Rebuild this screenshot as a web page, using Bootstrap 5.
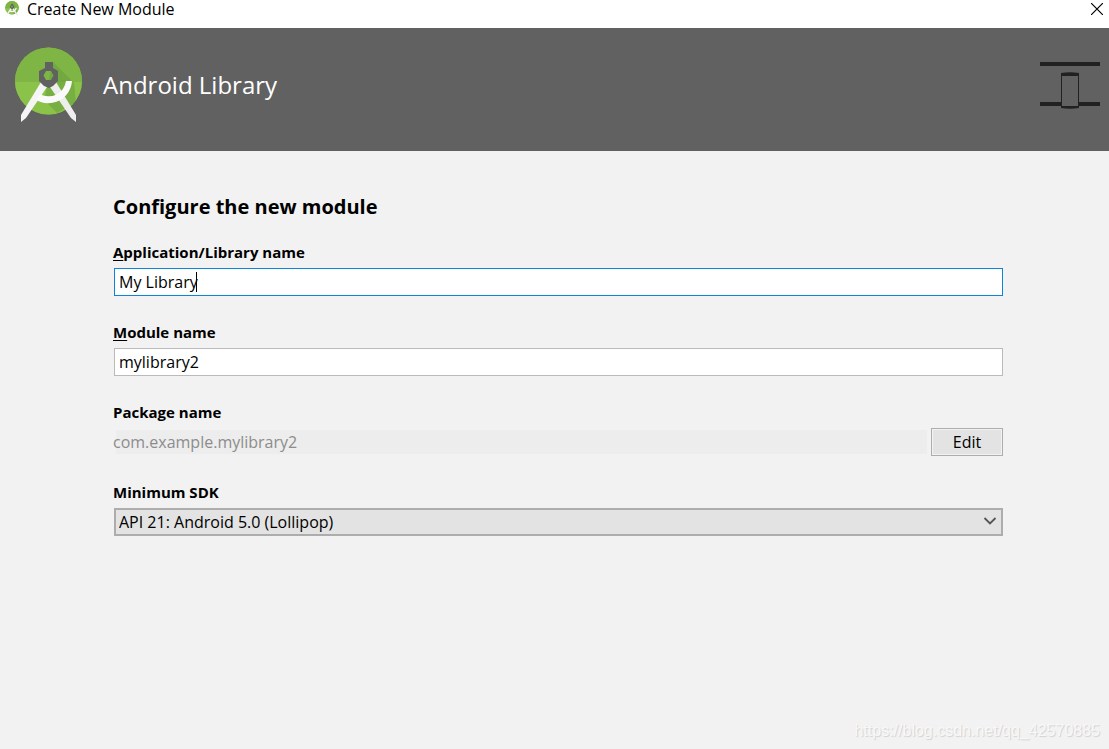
<!DOCTYPE html>
<html lang="en">
<head>
<meta charset="utf-8">
<meta name="viewport" content="width=device-width, initial-scale=1">
<title>Create New Module</title>
<link rel="stylesheet" href="https://cdn.jsdelivr.net/npm/bootstrap@5.3.0/dist/css/bootstrap.min.css">
<script defer src="https://cdn.jsdelivr.net/npm/bootstrap@5.3.0/dist/js/bootstrap.bundle.min.js"></script>
<style>
  body { font-family: "Open Sans", "Noto Sans", sans-serif; font-size: 16px; line-height: 24px; color: #000; background: #f2f2f2; }
  .title-bar { height: 28px; padding: 0 6px 0 5px; background: #fff; }
  .title-bar h1 { font-size: 16px; line-height: 18px; }
  .title-bar button { padding: 3px 0 0; }
  .wizard-head { height: 123px; padding: 0 9px 10px 14px; background: #616161; color: #fff; }
  .wizard-head h2 { font-size: 24px; line-height: 36px; }
  .wizard-body { padding: 38px 106px 0 113px; }
  .wizard-body h3 { font-size: 20px; line-height: 36px; margin-bottom: 15px; }
  .field { margin-bottom: 24px; }
  .form-label { font-size: 15px; margin-bottom: 4px; }
  .form-label u { text-underline-offset: 2px; }
  .field-box { margin-left: 1px; }
  .form-control, .form-select { height: 28px; padding: 0 4px; font-size: 16px; line-height: 24px; color: #000; border: 1px solid #bababa; border-radius: 0; }
  .form-control:focus, .form-control.active { border-color: #0c84d8; box-shadow: none; }
  .form-control.package { height: 24px; padding: 0; border: 0; color: #8c8c8c; background: linear-gradient(to right, #f2f2f2 3px, #ededed 3px); }
  .form-select { border: 2px solid #adadad; padding-left: 3px; background-color: #e3e3e3; background-image: none; }
  .caret { position: absolute; left: 82px; top: 4px; width: 1px; height: 20px; background: #000; }
  .arrow { position: absolute; right: 6px; top: 8px; pointer-events: none; }
  .btn-edit { width: 72px; height: 28px; padding: 0; font-size: 16px; line-height: 24px; color: #000; background: #e3e3e3; border: 1px solid #adadad; border-radius: 0; box-shadow: inset 0 0 0 1px #f2f2f2; }
  .watermark { padding: 0 9px 6px; font-family: "Liberation Sans", sans-serif; font-size: 16px; color: #f8f8f8; text-shadow: 1px 1px 1px #d0d0d0; }
</style>
</head>
<body class="min-vh-100 d-flex flex-column">
<svg width="0" height="0" class="position-absolute" aria-hidden="true">
  <defs>
    <clipPath id="disc"><circle cx="34.500" cy="34" r="33.500"/></clipPath>
    <symbol id="studio" viewBox="0 0 69 76">
      <circle cx="34.500" cy="34" r="33.500" fill="#7cb342"/>
      <g clip-path="url(#disc)">
        <path d="M0 0H69V36H0Z" fill="#7eb544"/>
        <path d="M0 35H69V68H0Z" fill="#8bc34a"/>
        <path d="M39 15L60 36 62 55 43 66 30 53Z" fill="#659c3b" opacity=".5"/>
      </g>
      <path d="M27 35L33 40 12 71 7 75V68Z" fill="#f5f5f5"/>
      <path d="M42 35L36 40 57 71 62 75V68Z" fill="#eee"/>
      <path d="M58 34A24 24 0 0 1 22 53L26 47A17.500 17.500 0 0 0 52 34Z" fill="#fafafa"/>
      <path fill-rule="evenodd" d="M31 15H39V21L44 24V34L39 39 35 41 30 39 25 34V24L31 21ZM32 24L29.500 28.500 32 33H37L39.500 28.500 37 24Z" fill="#616161"/>
    </symbol>
  </defs>
</svg>
<header>
  <div class="title-bar d-flex align-items-start justify-content-between">
    <div class="d-flex gap-2">
      <svg width="14" height="17" aria-hidden="true"><use href="#studio"/></svg>
      <h1 class="fw-normal m-0">Create New Module</h1>
    </div>
    <button type="button" class="border-0 bg-transparent d-flex" aria-label="Close">
      <svg width="12" height="12" viewBox="0 0 12 12" aria-hidden="true"><path d="M0 0L12 12M12 0L0 12" stroke="#000" stroke-width="1.200"/></svg>
    </button>
  </div>
  <div class="wizard-head d-flex align-items-center justify-content-between">
    <div class="d-flex align-items-center">
      <svg width="69" height="76" class="me-3" aria-hidden="true"><use href="#studio"/></svg>
      <h2 class="fw-normal m-0 ps-1">Android Library</h2>
    </div>
    <svg width="60" height="48" viewBox="0 0 60 48" aria-hidden="true">
      <path d="M0 1H60V5H0ZM0 41H60V45H0Z" fill="#212121"/>
      <path d="M21 12Q30 10.500 39 12V47Q30 48.500 21 47Z" fill="#212121"/>
      <path d="M22 15H38V45H22Z" fill="#616161"/>
    </svg>
  </div>
</header>
<main class="wizard-body flex-grow-1">
  <h3 class="fw-bold">Configure the new module</h3>
  <form>
    <div class="field">
      <label class="form-label fw-bold d-block" for="app"><u>A</u>pplication/Library name</label>
      <div class="field-box position-relative">
        <input class="form-control active" id="app" type="text" value="My Library">
        <span class="caret"></span>
      </div>
    </div>
    <div class="field">
      <label class="form-label fw-bold d-block" for="module"><u>M</u>odule name</label>
      <div class="field-box"><input class="form-control" id="module" type="text" value="mylibrary2"></div>
    </div>
    <div class="field">
      <label class="form-label fw-bold d-block" for="package">Package name</label>
      <div class="d-flex align-items-center gap-1">
        <input class="form-control package" id="package" type="text" value="com.example.mylibrary2" disabled>
        <button type="button" class="btn btn-edit flex-shrink-0">Edit</button>
      </div>
    </div>
    <div class="field">
      <label class="form-label fw-bold d-block" for="sdk">Minimum SDK</label>
      <div class="field-box position-relative">
        <select class="form-select" id="sdk"><option>API 21: Android 5.0 (Lollipop)</option></select>
        <svg class="arrow" width="14" height="10" viewBox="0 0 14 10" aria-hidden="true"><path d="M1.500 2L7 7.500 12.500 2" fill="none" stroke="#555" stroke-width="1.800"/></svg>
      </div>
    </div>
  </form>
</main>
<footer class="watermark text-end">https://blog.csdn.net/qq_42570885</footer>
</body>
</html>
